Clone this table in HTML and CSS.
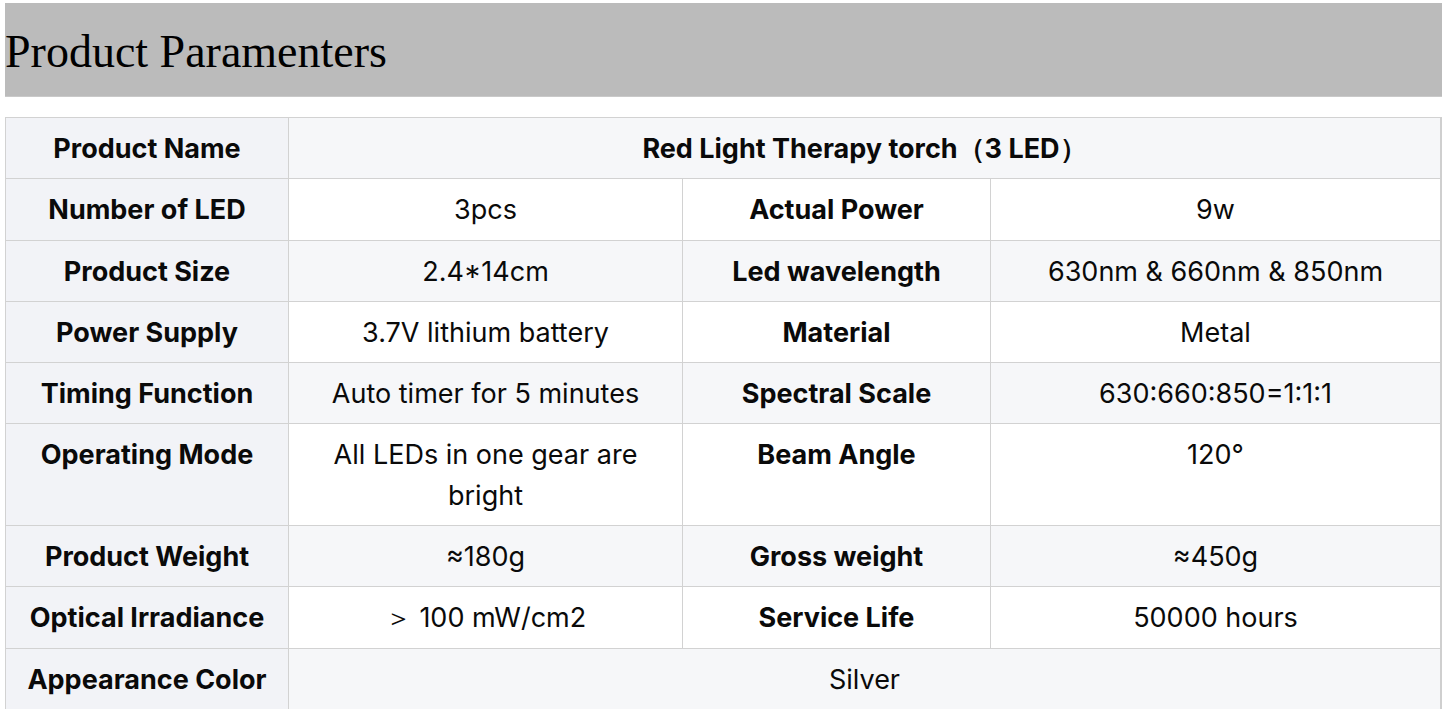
FILE: index.html
```html
<!DOCTYPE html>
<html lang="en">
<head>
<meta charset="utf-8">
<title>Product Paramenters</title>
<link rel="stylesheet" href="styles.css">
</head>
<body>
<div class="page">
  <h2 class="title-bar">Product Paramenters</h2>
  <table class="params">
    <colgroup>
      <col class="c1"><col class="c2"><col class="c3"><col class="c4">
    </colgroup>
    <tbody>
      <tr class="alt">
        <th>Product Name</th>
        <td colspan="3" class="strong">Red Light Therapy torch（3 LED）</td>
      </tr>
      <tr>
        <th>Number of LED</th><td>3pcs</td>
        <th class="inner">Actual Power</th><td>9w</td>
      </tr>
      <tr class="alt">
        <th>Product Size</th><td>2.4*14cm</td>
        <th class="inner">Led wavelength</th><td>630nm &amp; 660nm &amp; 850nm</td>
      </tr>
      <tr>
        <th>Power Supply</th><td>3.7V lithium battery</td>
        <th class="inner">Material</th><td>Metal</td>
      </tr>
      <tr class="alt">
        <th>Timing Function</th><td>Auto timer for 5 minutes</td>
        <th class="inner">Spectral Scale</th><td>630:660:850=1:1:1</td>
      </tr>
      <tr>
        <th>Operating Mode</th><td>All LEDs in one gear are bright</td>
        <th class="inner">Beam Angle</th><td>120°</td>
      </tr>
      <tr class="alt">
        <th>Product Weight</th><td>≈180g</td>
        <th class="inner">Gross weight</th><td>≈450g</td>
      </tr>
      <tr>
        <th>Optical Irradiance</th><td>＞ 100 mW/cm2</td>
        <th class="inner">Service Life</th><td>50000 hours</td>
      </tr>
      <tr class="alt">
        <th>Appearance Color</th>
        <td colspan="3">Silver</td>
      </tr>
    </tbody>
  </table>
</div>
</body>
</html>
```

FILE: styles.css
```css
html, body {
  margin: 0;
  padding: 0;
  background: #ffffff;
}

.page {
  padding: 3px 3px 0 5px;
}

.title-bar {
  margin: 0;
  height: 94px;
  box-sizing: border-box;
  padding-top: 22px;
  background: #bbbbbb;
  border-bottom: 1px solid #c9c9c9;
  font-family: "Liberation Serif", "Times New Roman", serif;
  font-weight: normal;
  font-size: 46px;
  line-height: 54px;
  color: #000000;
}

.params {
  margin-top: 20px;
  width: 1437px;
  table-layout: fixed;
  border-collapse: collapse;
  font-family: Inter, "Noto Sans", sans-serif;
  font-size: 27px;
  line-height: 40.3px;
  color: #0a0a0a;
  border-right: 2px solid #cfcfcf;
}

.c1 { width: 283px; }
.c2 { width: 394px; }
.c3 { width: 308px; }
.c4 { width: auto; }

.params th,
.params td {
  border: 1px solid #d2d2d2;
  padding: 11px 8px 9px;
  text-align: center;
  vertical-align: top;
  background: #ffffff;
}

.params th {
  font-weight: 700;
  background: #f2f3f7;
}

.params th.inner {
  background: #ffffff;
}

.params tr.alt td,
.params tr.alt th.inner {
  background: #f6f7f9;
}

.params td.strong {
  font-weight: 700;
}
```
